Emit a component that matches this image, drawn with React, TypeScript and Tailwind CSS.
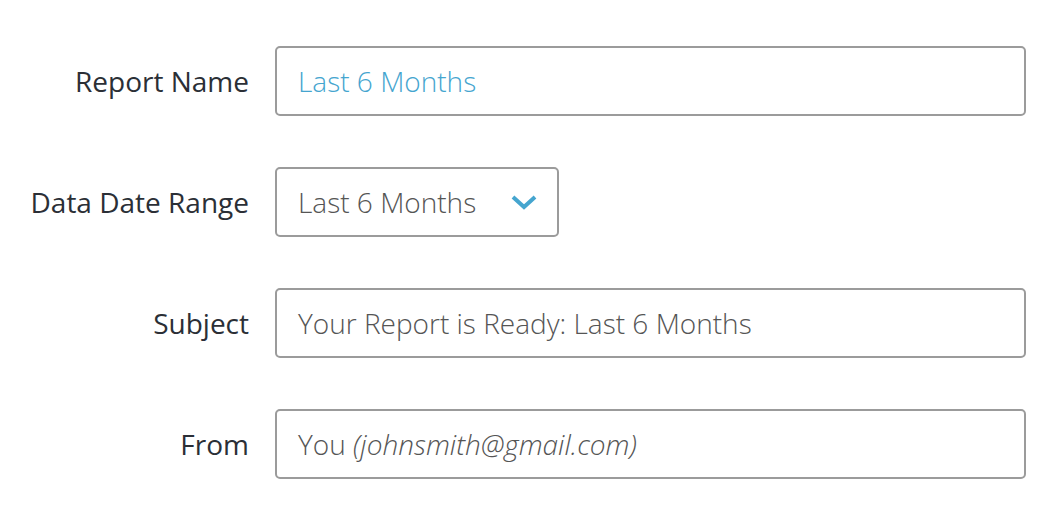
import { useState } from 'react'

function Label({ children }: { children: string }) {
  return (
    <label className="w-[275px] shrink-0 pr-[26px] text-right text-[28px] text-[#2b2f36]">
      {children}
    </label>
  )
}

const boxClass =
  'h-[70px] rounded-[5px] border-2 border-[#9b9b9b] bg-white px-[21px] flex items-center text-[28px] font-light'

export default function App() {
  const [range] = useState('Last 6 Months')
  return (
    <div
      className="w-[1051px] h-[526px] bg-white pt-[46px] flex flex-col gap-[51px]"
      style={{ fontFamily: '"Open Sans", sans-serif' }}
    >
      <div className="flex items-center">
        <Label>Report Name</Label>
        <div className={`${boxClass} w-[751px] text-[#45a5cf]`}>Last 6 Months</div>
      </div>
      <div className="flex items-center">
        <Label>Data Date Range</Label>
        <div className={`${boxClass} w-[284px] justify-between text-[#555]`}>
          <span>{range}</span>
          <svg width="28" height="18" viewBox="0 0 28 18" className="mr-[-2px]">
            <path d="M3 4 L14 14 L25 4" fill="none" stroke="#45a5cf" strokeWidth="4" />
          </svg>
        </div>
      </div>
      <div className="flex items-center">
        <Label>Subject</Label>
        <div className={`${boxClass} w-[751px] text-[#555]`}>Your Report is Ready: Last 6 Months</div>
      </div>
      <div className="flex items-center">
        <Label>From</Label>
        <div className={`${boxClass} w-[751px] text-[#555]`}>
          You&nbsp;<em>(johnsmith@gmail.com)</em>
        </div>
      </div>
    </div>
  )
}
